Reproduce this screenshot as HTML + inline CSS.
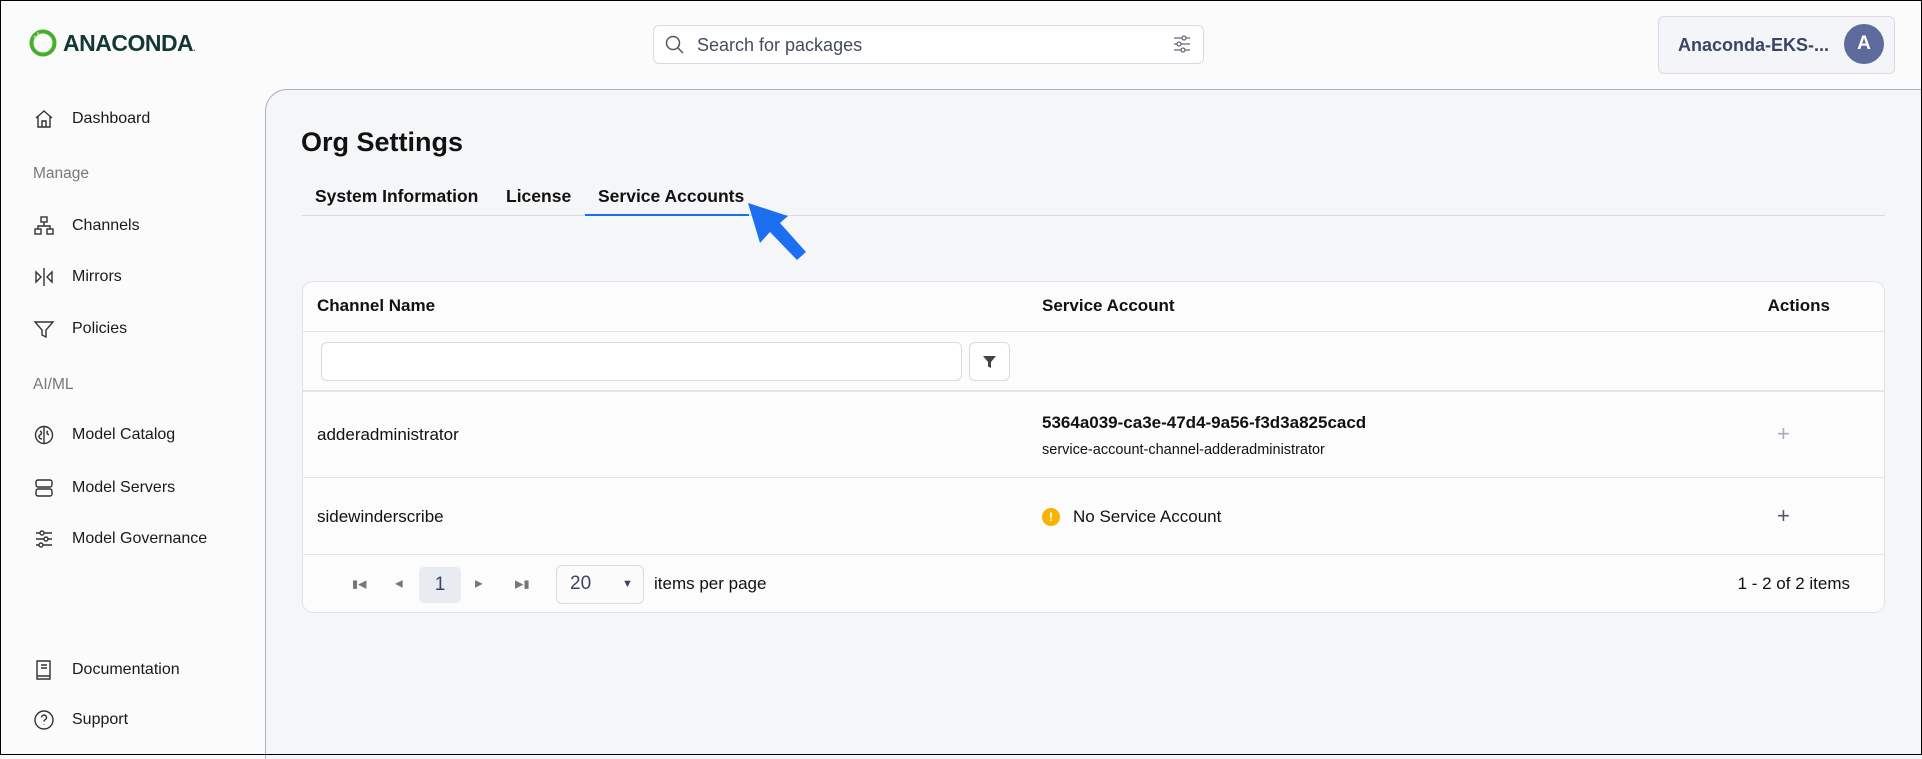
<!DOCTYPE html>
<html><head><meta charset="utf-8"><style>
*{box-sizing:border-box;margin:0;padding:0}
body{width:1922px;height:755px;overflow:hidden;background:#fbfbfc;font-family:"Liberation Sans",sans-serif;color:#111;position:relative}
.frame{position:absolute;inset:0;border:1.5px solid #000;pointer-events:none;z-index:10}
.abs{position:absolute}
.nav{position:absolute;left:33px;display:flex;align-items:center;font-size:16px;color:#1a1a1a}
.nav svg{width:22px;height:22px;margin-right:17px;stroke:#333;fill:none;stroke-width:1.4}
.sec{position:absolute;left:33px;font-size:15.5px;color:#777}
.panel{position:absolute;left:265px;top:89px;width:1660px;height:670px;background:#f5f6f8;border-left:1.5px solid #a8b1c9;border-top:1.5px solid #a8b1c9;border-top-left-radius:22px}
.card{position:absolute;left:302px;top:281px;width:1583px;height:332px;background:#fcfcfd;border:1px solid #dfe2e8;border-radius:11px;overflow:hidden}
.row{position:absolute;left:0;width:100%;border-bottom:1px solid #e2e4e8}
.t{position:absolute;font-size:17px;white-space:nowrap;transform:translateY(-50%)}
</style></head><body>
<div class="frame"></div>
<!-- logo -->
<svg class="abs" style="left:29px;top:29px" width="28" height="28" viewBox="0 0 28 28"><circle cx="14" cy="14" r="11.5" fill="none" stroke="#43b02a" stroke-width="4"/><circle cx="6" cy="8" r="1.5" fill="#9fdc8c"/><circle cx="9" cy="4.5" r="1.2" fill="#9fdc8c"/></svg>
<div class="abs" style="left:63px;top:29px;font-size:23px;font-weight:bold;color:#143836;letter-spacing:-0.5px;line-height:28px">ANACONDA<span style="font-size:8px">.</span></div>
<!-- search -->
<div class="abs" style="left:653px;top:25px;width:551px;height:39px;border:1px solid #d8dbe2;border-radius:6px;background:#fff"></div>
<svg class="abs" style="left:664px;top:34px" width="22" height="22" viewBox="0 0 22 22" fill="none" stroke="#555" stroke-width="1.5"><circle cx="9" cy="9" r="6.5"/><path d="M14 14l5 5"/></svg>
<div class="abs" style="left:697px;top:34px;font-size:18px;color:#444c5c;line-height:22px">Search for packages</div>
<svg class="abs" style="left:1172px;top:33px" width="20" height="22" viewBox="0 0 20 22" fill="none" stroke="#667" stroke-width="1.3"><path d="M2 5h16M2 11h16M2 17h16"/><circle cx="12" cy="5" r="2" fill="#fff"/><circle cx="7" cy="11" r="2" fill="#fff"/><circle cx="11" cy="17" r="2" fill="#fff"/></svg>
<!-- user -->
<div class="abs" style="left:1658px;top:16px;width:237px;height:58px;border:1px solid #d8dbe2;border-radius:6px;background:#f4f5f8"></div>
<div class="abs" style="left:1678px;top:34px;font-size:18px;font-weight:bold;color:#3a4563;line-height:22px">Anaconda-EKS-...</div>
<div class="abs" style="left:1844px;top:24px;width:40px;height:40px;border-radius:50%;background:#5c6b9c;color:#fff;font-size:19px;font-weight:bold;text-align:center;line-height:40px">A</div>
<!-- sidebar -->
<div class="nav" style="top:108px"><svg viewBox="0 0 22 22"><path d="M3 10L11 3l8 7M5 8.5V19h12V8.5M9 19v-6h4v6"/></svg>Dashboard</div>
<div class="sec" style="top:165px">Manage</div>
<div class="nav" style="top:215px"><svg viewBox="0 0 22 22"><rect x="8" y="2" width="6" height="5"/><rect x="2" y="14" width="6" height="5"/><rect x="14" y="14" width="6" height="5"/><path d="M11 7v4M5 14v-3h12v3"/></svg>Channels</div>
<div class="nav" style="top:266px"><svg viewBox="0 0 22 22"><path d="M11 2v18M3 6v10l5-5zM19 6v10l-5-5z"/></svg>Mirrors</div>
<div class="nav" style="top:318px"><svg viewBox="0 0 22 22"><path d="M2 4h18l-7 8v7l-4-2v-5z"/></svg>Policies</div>
<div class="sec" style="top:376px">AI/ML</div>
<div class="nav" style="top:424px"><svg viewBox="0 0 22 22"><circle cx="11" cy="11" r="8.5"/><path d="M11 3v16M7 7c2 1 2 3 0 4s-1 4 2 4M15 7c-2 1-1 3 1 4"/></svg>Model Catalog</div>
<div class="nav" style="top:477px"><svg viewBox="0 0 22 22"><rect x="3" y="3" width="16" height="7" rx="2"/><rect x="3" y="12" width="16" height="7" rx="2"/></svg>Model Servers</div>
<div class="nav" style="top:528px"><svg viewBox="0 0 22 22"><path d="M3 5h16M3 11h16M3 17h16"/><circle cx="9" cy="5" r="2" fill="#fff"/><circle cx="13" cy="11" r="2" fill="#fff"/><circle cx="8" cy="17" r="2" fill="#fff"/></svg>Model Governance</div>
<div class="nav" style="top:659px"><svg viewBox="0 0 22 22"><path d="M4 2h13v18H4zM4 17h13M8 6h6M8 9h6"/></svg>Documentation</div>
<div class="nav" style="top:709px"><svg viewBox="0 0 22 22"><circle cx="11" cy="11" r="9"/><path d="M8.5 8.5a2.5 2.5 0 1 1 3.5 2.3c-.8.4-1 .9-1 1.7M11 15.5v.5"/></svg>Support</div>
<!-- panel -->
<div class="panel"></div>
<div class="abs" style="left:301px;top:126px;font-size:27px;font-weight:bold;color:#111;line-height:32px">Org Settings</div>
<div class="abs" style="left:302px;top:215px;width:1583px;height:1px;background:#d8dbe2"></div>
<div class="abs" style="left:585px;top:214px;width:164px;height:2px;background:#1a6ef0"></div>
<div class="abs" style="left:315px;top:186px;font-size:17.5px;font-weight:bold;line-height:21px">System Information</div>
<div class="abs" style="left:506px;top:186px;font-size:17.5px;font-weight:bold;line-height:21px">License</div>
<div class="abs" style="left:598px;top:186px;font-size:17.5px;font-weight:bold;line-height:21px">Service Accounts</div>
<svg class="abs" style="left:740px;top:195px" width="75" height="75" viewBox="740 195 75 75"><polygon points="748,203 788,216 780,223 806,252 797,260 770,232 760,243" fill="#1d6ff2"/></svg>
<!-- card -->
<div class="card">
 <div class="row" style="top:0;height:50px"></div>
 <div class="t" style="left:14px;top:24px;font-weight:bold">Channel Name</div>
 <div class="t" style="left:739px;top:24px;font-weight:bold">Service Account</div>
 <div class="t" style="right:54px;top:24px;font-weight:bold">Actions</div>
 <div class="row" style="top:50px;height:60px;border-bottom:2px solid #e2e4e8"></div>
 <div class="abs" style="left:18px;top:60px;width:641px;height:39px;border:1px solid #d8dbe2;border-radius:6px;background:#fff"></div>
 <div class="abs" style="left:666px;top:60px;width:41px;height:39px;border:1px solid #d8dbe2;border-radius:6px;background:#fff"></div>
 <svg class="abs" style="left:679px;top:73px" width="15" height="14" viewBox="0 0 15 14"><path d="M1 1h13l-5 6v6l-3-1.5V7z" fill="#444"/></svg>
 <div class="row" style="top:110px;height:86px"></div>
 <div class="t" style="left:14px;top:153px">adderadministrator</div>
 <div class="t" style="left:739px;top:141px;font-weight:bold">5364a039-ca3e-47d4-9a56-f3d3a825cacd</div>
 <div class="t" style="left:739px;top:168px;font-size:14.5px">service-account-channel-adderadministrator</div>
 <div class="t" style="left:1474px;top:152px;font-size:22px;color:#aab;font-weight:300">+</div>
 <div class="row" style="top:196px;height:77px"></div>
 <div class="t" style="left:14px;top:235px">sidewinderscribe</div>
 <div class="abs" style="left:739px;top:226px;width:18px;height:18px;border-radius:50%;background:#f6b400;color:#fff;font-size:12px;font-weight:bold;text-align:center;line-height:18px">!</div>
 <div class="t" style="left:770px;top:235px">No Service Account</div>
 <div class="t" style="left:1474px;top:234px;font-size:22px;color:#556">+</div>
 <div class="t" style="left:49px;top:302px;font-size:11px;color:#777">&#9646;&#9664;</div>
 <div class="t" style="left:92px;top:302px;font-size:10px;color:#777">&#9664;</div>
 <div class="abs" style="left:116px;top:285px;width:42px;height:36px;border-radius:5px;background:#e8ebf1;font-size:19px;color:#3a4563;text-align:center;line-height:36px">1</div>
 <div class="t" style="left:172px;top:302px;font-size:10px;color:#777">&#9654;</div>
 <div class="t" style="left:212px;top:302px;font-size:11px;color:#777">&#9654;&#9646;</div>
 <div class="abs" style="left:253px;top:283px;width:88px;height:39px;border:1px solid #d8dbe2;border-radius:6px;background:#fbfbfc"></div>
 <div class="t" style="left:267px;top:302px;font-size:19px;color:#3a4563">20</div>
 <div class="t" style="left:319px;top:302px;font-size:11px;color:#3a4563">&#9660;</div>
 <div class="t" style="left:351px;top:302px">items per page</div>
 <div class="t" style="right:34px;top:302px">1 - 2 of 2 items</div>
</div>
</body></html>
